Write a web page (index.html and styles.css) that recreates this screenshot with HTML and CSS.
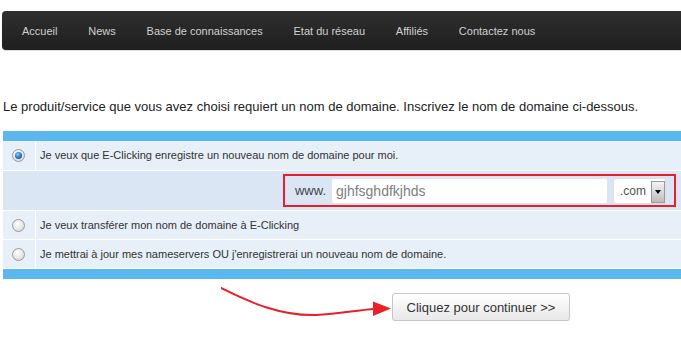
FILE: index.html
```html
<!DOCTYPE html>
<html lang="fr">
<head>
<meta charset="utf-8">
<title>Nom de domaine</title>
<link rel="stylesheet" href="styles.css">
</head>
<body>
<nav class="topnav">
  <ul class="topnav-list">
    <li>Accueil</li>
    <li>News</li>
    <li>Base de connaissances</li>
    <li>Etat du réseau</li>
    <li>Affiliés</li>
    <li>Contactez nous</li>
  </ul>
</nav>
<main class="content">
  <p class="intro">Le produit/service que vous avez choisi requiert un nom de domaine. Inscrivez le nom de domaine ci-dessous.</p>
  <div class="domain-table">
    <div class="band"></div>
    <div class="row row-1">
      <div class="cell-radio"><span class="radio checked"></span></div>
      <div class="cell-label">Je veux que E-Clicking enregistre un nouveau nom de domaine pour moi.</div>
    </div>
    <div class="row row-field">
      <div class="domain-box">
        <span class="www">www.</span>
        <div class="text-input">gjhfsghdfkjhds</div>
        <div class="select">
          <span class="select-value">.com</span>
          <span class="select-arrow"><span class="caret"></span></span>
        </div>
      </div>
    </div>
    <div class="row row-3">
      <div class="cell-radio"><span class="radio"></span></div>
      <div class="cell-label">Je veux transférer mon nom de domaine à E-Clicking</div>
    </div>
    <div class="row row-4">
      <div class="cell-radio"><span class="radio"></span></div>
      <div class="cell-label">Je mettrai à jour mes nameservers OU j'enregistrerai un nouveau nom de domaine.</div>
    </div>
    <div class="band"></div>
  </div>
  <div class="actions">
    <svg class="arrow" width="171" height="35" viewBox="0 0 171 35">
      <path d="M0,3 C30,18 60,31 95,30 C120,29 135,25 154,24" fill="none" stroke="#e8202a" stroke-width="2" stroke-linecap="round"/>
      <polygon points="152,16.5 170,23.5 152,31" fill="#e8202a"/>
    </svg>
    <button class="continue" type="button">Cliquez pour continuer &gt;&gt;</button>
  </div>
</main>
</body>
</html>
```
FILE: styles.css
```css
html, body {
  margin: 0;
  padding: 0;
  background: #fff;
  font-family: "Liberation Sans", Arial, sans-serif;
  overflow: hidden;
}

.topnav {
  margin: 11px 0 0 2px;
  height: 39px;
  background: linear-gradient(#2f2f2f, #1f1f1f);
  border-radius: 4px 0 0 4px;
  box-shadow: 0 1px 1px rgba(0,0,0,0.15);
}

.topnav-list {
  list-style: none;
  margin: 0;
  padding: 0 0 0 5px;
  display: flex;
  height: 39px;
  align-items: center;
}

.topnav-list li {
  padding: 0 15.4px;
  font-size: 11px;
  color: #cfcfcf;
  line-height: 14px;
}

.topnav-list li:first-child {
  padding-left: 15px;
}

.content {
  padding-left: 3px;
}

.intro {
  margin: 49px 0 16px 0;
  font-size: 13px;
  line-height: 16px;
  color: #222;
}

.domain-table {
  display: flex;
  flex-direction: column;
}

.band {
  height: 10px;
  background: #5bb8ef;
}

.row {
  display: flex;
  background: #e7eff9;
  border-bottom: 1px solid #fff;
  font-size: 11px;
  color: #333;
}

.row-1 { height: 29px; }
.row-3, .row-4 { height: 28px; }

.row-field {
  height: 39px;
  background: #dbe6f5;
  justify-content: flex-end;
  align-items: flex-start;
  padding-right: 5px;
}

.cell-radio {
  width: 33px;
  border-right: 1px solid #fff;
  display: flex;
  align-items: center;
  padding-left: 9px;
  box-sizing: border-box;
}

.cell-label {
  display: flex;
  align-items: center;
  padding-left: 4px;
  line-height: 13px;
}

.radio {
  width: 13px;
  height: 13px;
  border-radius: 50%;
  box-sizing: border-box;
  border: 1px solid #9a9a9a;
  background: radial-gradient(circle at 40% 35%, #ffffff 0%, #e6e6e6 55%, #c9c9c9 100%);
  display: flex;
  align-items: center;
  justify-content: center;
}

.radio.checked::after {
  content: "";
  width: 7px;
  height: 7px;
  border-radius: 50%;
  background: radial-gradient(circle at 40% 35%, #8fd0ff 0%, #2a7fd0 45%, #0c3f7a 100%);
}

.domain-box {
  margin-top: 3px;
  height: 33px;
  box-sizing: border-box;
  border: 2px solid #e3202b;
  padding: 0 8px 0 10px;
  display: flex;
  align-items: center;
  gap: 5px;
}

.www {
  font-size: 13px;
  color: #444;
}

.text-input {
  width: 277px;
  height: 26px;
  box-sizing: border-box;
  background: #fff;
  border: 1px solid #e4e4e4;
  border-radius: 3px;
  padding-left: 4px;
  font-size: 14px;
  line-height: 24px;
  color: #808080;
}

.select {
  width: 53px;
  height: 26px;
  box-sizing: border-box;
  background: #fff;
  border: 1px solid #e0e0e0;
  border-radius: 3px;
  display: flex;
  align-items: center;
  padding-left: 6px;
}

.select-value {
  font-size: 12px;
  color: #555;
}

.select-arrow {
  margin-left: auto;
  margin-top: 2px;
  width: 14px;
  height: 22px;
  box-sizing: border-box;
  border: 1px solid #9a9a9a;
  background: linear-gradient(#f4f4f4, #bdbdbd);
  display: flex;
  align-items: center;
  justify-content: center;
}

.caret {
  width: 0;
  height: 0;
  border-left: 3.5px solid transparent;
  border-right: 3.5px solid transparent;
  border-top: 4px solid #000;
}

.actions {
  display: flex;
  align-items: flex-start;
}

.arrow {
  display: block;
  margin: 6px 0 0 218px;
  flex: none;
}

.continue {
  margin-top: 14px;
  width: 178px;
  height: 28px;
  border: 1px solid #c6c6c6;
  border-radius: 3px;
  background: linear-gradient(#ffffff, #e8e8e8);
  font-family: "Liberation Sans", Arial, sans-serif;
  font-size: 13px;
  color: #333;
  padding: 0;
  box-shadow: 0 1px 1px rgba(0,0,0,0.06);
}
```
